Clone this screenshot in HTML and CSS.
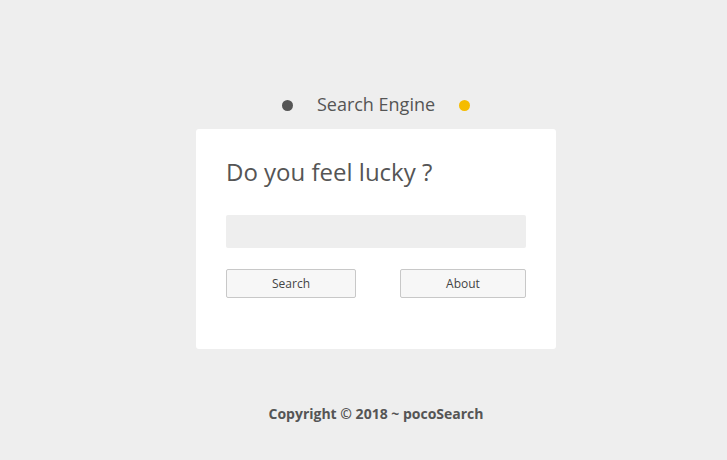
FILE: index.html
```html
<!DOCTYPE html>
<html>
<head>
<meta charset="utf-8">
<link rel="stylesheet" href="styles.css">
</head>
<body>
<div class="page">
  <header class="brand">
    <span class="dot dot-dark"></span>
    <span class="brand-name">Search Engine</span>
    <span class="dot dot-yellow"></span>
  </header>
  <main class="card">
    <h1 class="title">Do you feel lucky ?</h1>
    <input class="query" type="text">
    <div class="actions">
      <button class="btn btn-search">Search</button>
      <button class="btn btn-about">About</button>
    </div>
  </main>
  <footer class="footer">Copyright © 2018 ~ pocoSearch</footer>
</div>
</body>
</html>
```

FILE: styles.css
```css
html, body {
  margin: 0;
  padding: 0;
  background: #eeeeee;
  font-family: "Open Sans", "DejaVu Sans", sans-serif;
  color: #555;
}
.page {
  display: flex;
  flex-direction: column;
  align-items: center;
  padding-left: 25px;
  padding-top: 91px;
}
.brand {
  display: flex;
  align-items: center;
  gap: 24px;
  height: 25px;
}
.dot {
  width: 11px;
  height: 11px;
  border-radius: 50%;
  display: block;
  margin-top: 4px;
}
.dot-dark { background: #555555; }
.dot-yellow { background: #f5bc00; }
.brand-name {
  font-size: 18px;
  color: #555;
}
.card {
  margin-top: 13px;
  width: 360px;
  height: 220px;
  box-sizing: border-box;
  padding: 26px 30px 0 30px;
  background: #fff;
  border-radius: 3px;
}
.title {
  margin: 0;
  font-size: 24px;
  font-weight: 400;
  line-height: 34px;
  color: #555;
}
.query {
  display: block;
  margin-top: 26px;
  width: 300px;
  height: 33px;
  box-sizing: border-box;
  border: none;
  border-radius: 2px;
  background: #eeeeee;
  outline: none;
}
.actions {
  display: flex;
  justify-content: space-between;
  margin-top: 21px;
}
.btn {
  height: 29px;
  box-sizing: border-box;
  background: #f7f7f7;
  border: 1px solid #c8c8c8;
  border-radius: 2px;
  font-family: "Open Sans", sans-serif;
  font-size: 12px;
  line-height: 26px;
  color: #444;
  padding: 0;
}
.btn-search { width: 130px; }
.btn-about { width: 126px; }
.footer {
  margin-top: 55px;
  font-size: 14px;
  font-weight: 700;
  color: #555;
}
```
